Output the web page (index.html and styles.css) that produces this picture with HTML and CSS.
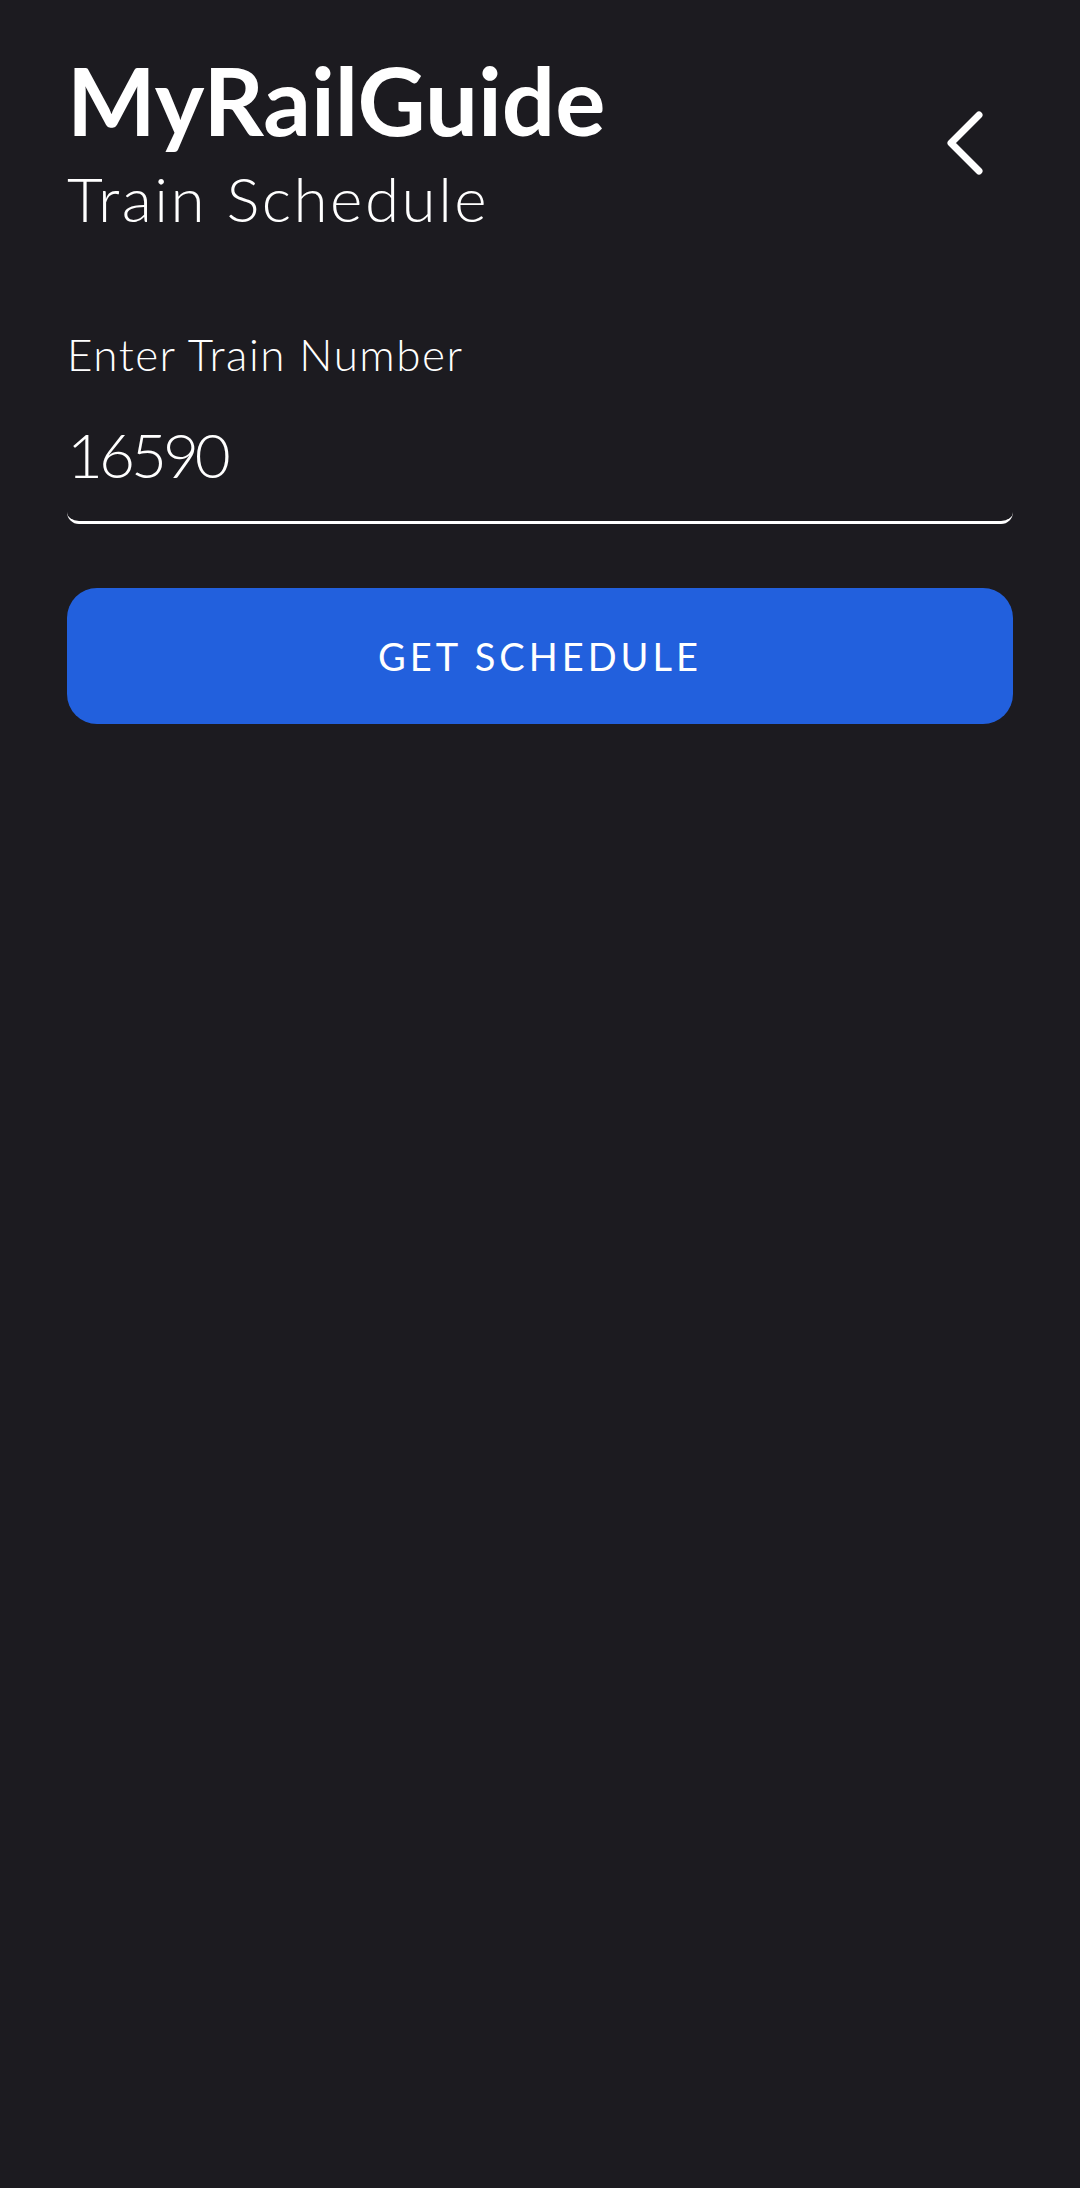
FILE: index.html
```html
<!DOCTYPE html>
<html>
<head>
<meta charset="utf-8">
<link rel="stylesheet" href="styles.css">
</head>
<body>
<div class="screen">
  <header class="header">
    <div class="titles">
      <h1 class="app-title">MyRailGuide</h1>
      <h2 class="page-title">Train Schedule</h2>
    </div>
    <button class="back" aria-label="Back">
      <svg width="48" height="72" viewBox="0 0 48 72"><path d="M38 6 L10 34 L38 62" fill="none" stroke="#fff" stroke-width="7" stroke-linecap="round" stroke-linejoin="round"/></svg>
    </button>
  </header>
  <form class="form">
    <label class="label">Enter Train Number</label>
    <div class="input">16590</div>
    <button type="button" class="submit">GET SCHEDULE</button>
  </form>
</div>
</body>
</html>
```
FILE: styles.css
```css
html, body {
  margin: 0;
  padding: 0;
  background: #1c1b20;
}
body {
  width: 1080px;
  height: 2188px;
  font-family: Lato, "Open Sans", sans-serif;
  color: #fff;
}
.screen {
  padding: 45px 67px 0 67px;
}
.header {
  display: flex;
  justify-content: space-between;
  align-items: flex-start;
}
.app-title {
  margin: 0;
  font-size: 94px;
  font-weight: 700;
  line-height: 110px;
  letter-spacing: 0;
}
.page-title {
  margin: 7px 0 0 0;
  font-size: 62px;
  font-weight: 300;
  line-height: 72px;
  letter-spacing: 2.5px;
}
.back {
  background: none;
  border: none;
  padding: 0;
  margin: 64px 24px 0 0;
  width: 48px;
  height: 72px;
  display: flex;
}
.form {
  display: flex;
  flex-direction: column;
  margin-top: 90px;
}
.label {
  font-size: 44px;
  font-weight: 300;
  line-height: 60px;
  letter-spacing: 1.5px;
}
.input {
  font-size: 62px;
  font-weight: 300;
  line-height: 80px;
  margin-top: 30px;
  padding-bottom: 27px;
  border-bottom: 3px solid #fff;
  border-radius: 0 0 12px 12px;
  letter-spacing: -4px;
}
.submit {
  margin-top: 64px;
  height: 136px;
  border: none;
  border-radius: 30px;
  background: #2260dd;
  color: #fff;
  font-family: Lato, sans-serif;
  font-size: 38px;
  font-weight: 400;
  letter-spacing: 4px;
}
```
